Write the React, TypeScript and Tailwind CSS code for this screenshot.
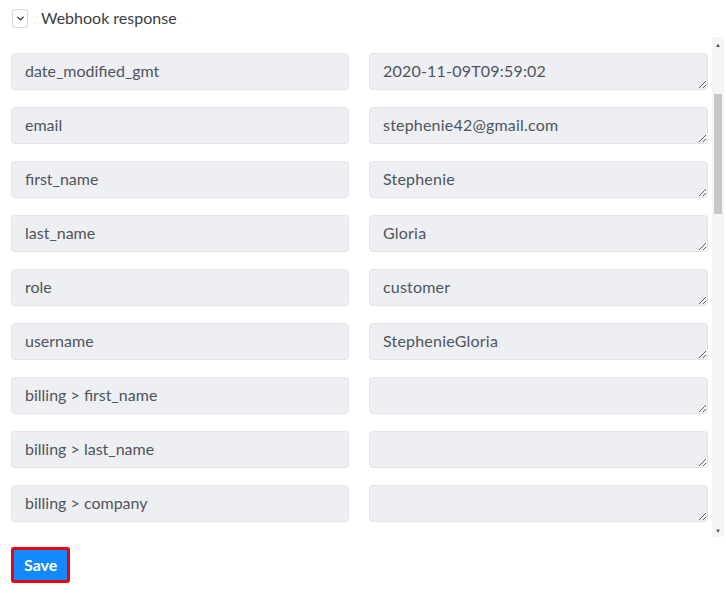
import { ChevronDown } from 'lucide-react'

const rows: { key: string; value: string }[] = [
  { key: 'date_modified_gmt',     value: '2020-11-09T09:59:02' },
  { key: 'email',                 value: 'stephenie42@gmail.com' },
  { key: 'first_name',            value: 'Stephenie' },
  { key: 'last_name',             value: 'Gloria' },
  { key: 'role',                  value: 'customer' },
  { key: 'username',              value: 'StephenieGloria' },
  { key: 'billing > first_name',  value: '' },
  { key: 'billing > last_name',   value: '' },
  { key: 'billing > company',     value: '' },
]

export default function App() {
  return (
    <div className="w-[726px] h-[605px] bg-white overflow-hidden font-['Lato','Open_Sans',sans-serif] text-[#4a4f57]">
      {/* Header */}
      <div className="flex items-start gap-[13px] pl-[12px] pt-[8px] h-[37px]">
        <button className="flex items-center justify-center w-[16px] h-[19px] mt-[1px] border border-[#d4d6db] rounded-[3px] bg-white">
          <ChevronDown className="size-[11px] text-[#333]" strokeWidth={3} />
        </button>
        <span className="text-[16px] text-[#3a3d42] leading-[20px]">Webhook response</span>
      </div>

      {/* Rows + scrollbar */}
      <div className="flex h-[500px]">
        <div className="flex-1 pt-[16px] pl-[11px] pr-[4px] flex flex-col gap-[17px] overflow-hidden">
          {rows.map(r => (
            <div key={r.key} className="grid grid-cols-[338px_339px] gap-[20px]">
              <div className="h-[37px] flex items-center px-[13px] pb-[1px] rounded-[4px] bg-[#eeeff3] border border-[#e3e4e9] text-[16px] text-[#4f545c]">
                {r.key}
              </div>
              <textarea
                readOnly
                value={r.value}
                rows={1}
                className="h-[37px] px-[13px] pt-[6px] rounded-[4px] bg-[#eeeff3] border border-[#e3e4e9] text-[16px] tracking-[0.2px] leading-[22px] text-[#4f545c] resize-y overflow-hidden outline-none font-['Lato','Open_Sans',sans-serif]"
              />
            </div>
          ))}
        </div>
        {/* Scrollbar */}
        <div className="w-[12px] mr-[2px] bg-[#f5f5f5] flex flex-col items-center">
          <div className="h-[13px] flex items-center justify-center text-[#555] text-[6px] leading-none pt-[2px]">▲</div>
          <div className="h-[44px]" />
          <div className="w-[8px] h-[120px] bg-[#c7c7c7]" />
          <div className="flex-1" />
          <div className="h-[13px] flex items-center justify-center text-[#555] text-[6px] leading-none">▼</div>
        </div>
      </div>

      {/* Save */}
      <div className="pl-[11px] pt-[10px]">
        <button className="h-[36px] px-[10px] rounded-[3px] bg-[#1289fe] border-[3px] border-[#f0000f] text-white font-bold text-[16px]">
          Save
        </button>
      </div>
    </div>
  )
}
